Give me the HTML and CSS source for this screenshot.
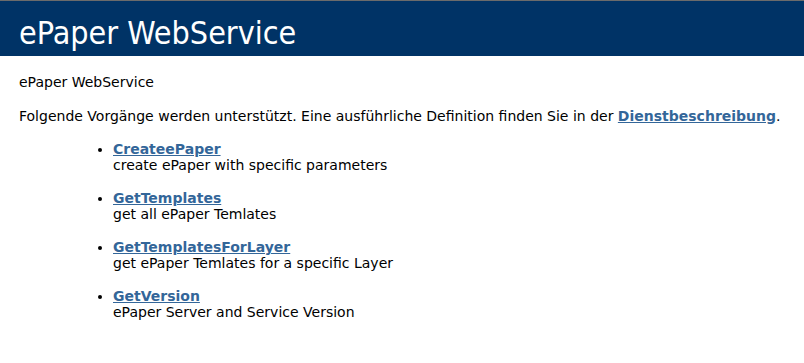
FILE: index.html
```html
<!DOCTYPE html>
<html lang="de">
<head>
    <meta charset="UTF-8">
    <title>ePaper WebService Webdienst</title>
    <link rel="stylesheet" href="styles.css">
</head>
<body>
    <div id="content">
        <p class="heading1">ePaper WebService</p>
        <p class="intro">ePaper WebService</p>
        <p class="intro">Folgende Vorgänge werden unterstützt. Eine ausführliche Definition finden Sie in der <a href="#">Dienstbeschreibung</a>.</p>
        <ul class="ops">
            <li>
                <a href="#">CreateePaper</a>
                <br>
                <span>create ePaper with specific parameters</span>
            </li>
            <li>
                <a href="#">GetTemplates</a>
                <br>
                <span>get all ePaper Temlates</span>
            </li>
            <li>
                <a href="#">GetTemplatesForLayer</a>
                <br>
                <span>get ePaper Temlates for a specific Layer</span>
            </li>
            <li>
                <a href="#">GetVersion</a>
                <br>
                <span>ePaper Server and Service Version</span>
            </li>
        </ul>
    </div>
</body>
</html>
```

FILE: styles.css
```css
body {
    color: #000000;
    background-color: white;
    font-family: 'DejaVu Sans', Verdana, sans-serif;
    margin: 0;
    border-top: 1px solid #6b6b6b;
}
#content {
    font-size: 14px;
    line-height: 16px;
    padding-bottom: 2em;
}
a:link, a:visited {
    color: #336699;
    font-weight: bold;
    text-decoration: underline;
}
.heading1 {
    color: #ffffff;
    font-family: 'DejaVu Sans Condensed', Tahoma, sans-serif;
    font-size: 32px;
    line-height: 38px;
    font-weight: normal;
    background-color: #003366;
    margin: 0;
    padding: 13px 0 4px 19px;
}
.intro {
    margin: 18px 0 0 19px;
}
.ops {
    margin: 17px 0 0 0;
    padding-left: 113px;
}
.ops li {
    margin-bottom: 17px;
}
```
